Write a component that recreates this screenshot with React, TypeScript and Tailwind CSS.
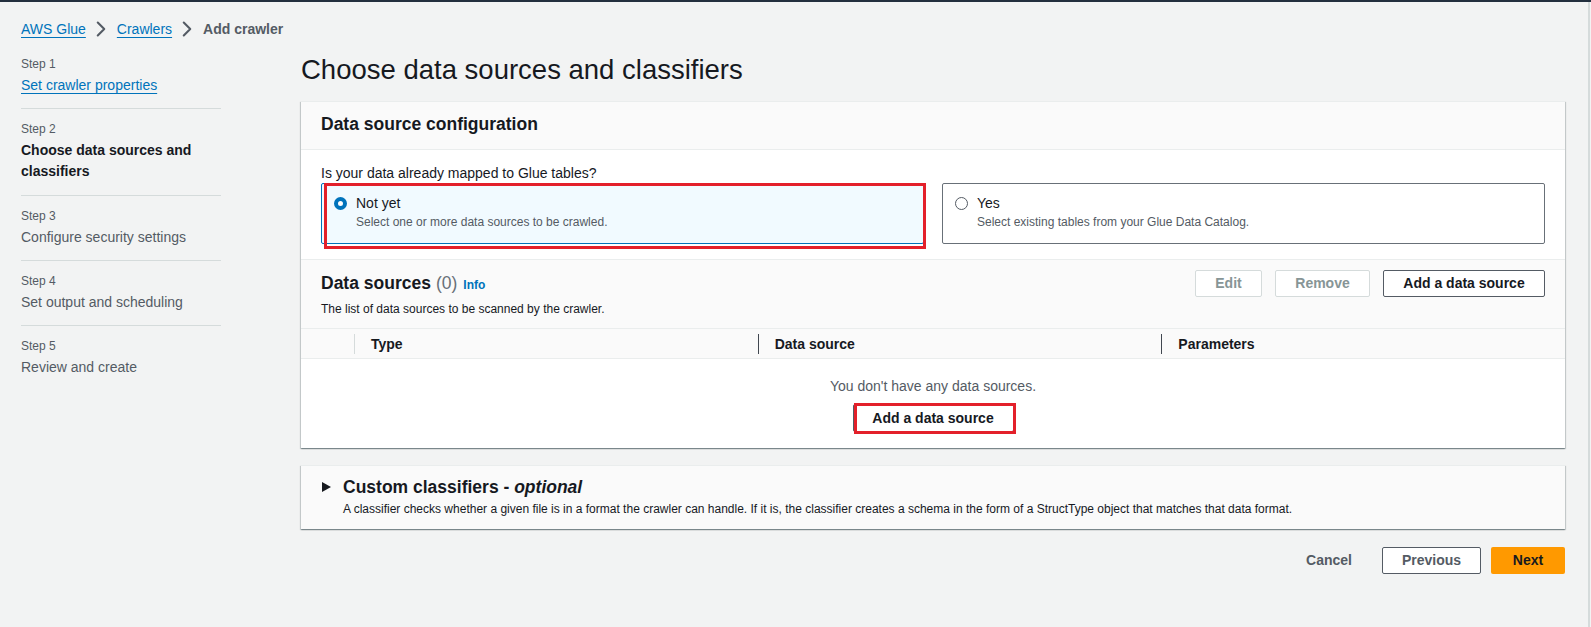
import { ChevronRight } from 'lucide-react'

// Step list for the wizard navigation
const STEPS = [
  { n: 1, label: 'Set crawler properties', state: 'done' },
  { n: 2, label: 'Choose data sources and classifiers', state: 'current' },
  { n: 3, label: 'Configure security settings', state: 'todo' },
  { n: 4, label: 'Set output and scheduling', state: 'todo' },
  { n: 5, label: 'Review and create', state: 'todo' },
]

const panelShadow =
  'border-t border-[#eaeded] shadow-[0_1px_1px_0_rgba(0,28,36,0.3),1px_1px_1px_0_rgba(0,28,36,0.15),-1px_1px_1px_0_rgba(0,28,36,0.15)]'

function Crumb() {
  return (
    <div className="flex items-center h-5 text-[14px] leading-5">
      <a className="text-[#0073bb] underline underline-offset-[3px]">AWS Glue</a>
      <ChevronRight className="w-[26px] h-[26px] ml-[2px] mr-[3px] text-[#545b64]" strokeWidth={1.9} />
      <a className="text-[#0073bb] underline underline-offset-[3px]">Crawlers</a>
      <ChevronRight className="w-[26px] h-[26px] ml-[2px] mr-[3px] text-[#545b64]" strokeWidth={1.9} />
      <span className="font-bold text-[#545b64]">Add crawler</span>
    </div>
  )
}

function StepNav() {
  return (
    <nav className="w-[200px] shrink-0 pt-[17px]">
      {STEPS.map((s, i) => (
        <div key={s.n} className={`${i > 0 ? 'border-t border-[#d5dbdb] pt-3' : ''} pb-[13px]`}>
          <div className="text-[12px] leading-4 text-[#545b64]">Step {s.n}</div>
          <div
            className={
              'mt-[3px] text-[14px] ' +
              (s.state === 'done'
                ? 'leading-5 text-[#0073bb] underline underline-offset-[3px]'
                : s.state === 'current'
                ? 'leading-[21px] font-bold text-[#16191f]'
                : 'leading-5 text-[#545b64]')
            }
          >
            {s.label}
          </div>
        </div>
      ))}
    </nav>
  )
}

function Tile({ selected, title, desc }: { selected: boolean; title: string; desc: string }) {
  return (
    <div
      className={
        'relative border rounded-[2px] pl-3 pt-[9px] pb-[13px] ' +
        (selected ? 'bg-[#f1faff] border-[#0073bb]' : 'bg-white border-[#687078]')
      }
    >
      <div className="flex items-center h-5">
        {selected ? (
          <span className="w-[13px] h-[13px] rounded-full border-[4px] border-[#0073bb] bg-white" />
        ) : (
          <span className="w-[13px] h-[13px] rounded-full border border-[#545b64] bg-white" />
        )}
        <span className="ml-[9px] text-[14px] leading-5 text-[#16191f]">{title}</span>
      </div>
      <div className="mt-[1px] ml-[22px] text-[12px] leading-4 text-[#545b64]">{desc}</div>
      {selected && (
        <div className="absolute left-[2px] -right-[3px] -top-[1px] -bottom-[6px] border-[3px] border-[#e3202a] pointer-events-none" />
      )}
    </div>
  )
}

function Btn({ children, w, disabled }: { children: string; w: string; disabled?: boolean }) {
  return (
    <button
      className={
        `${w} h-[27px] rounded-[2px] border bg-white text-[14px] font-bold ` +
        (disabled ? 'border-[#d5dbdb] text-[#879596]' : 'border-[#545b64] text-[#16191f]')
      }
    >
      {children}
    </button>
  )
}

export default function App() {
  return (
    <div className="min-h-screen bg-[#f2f3f3] font-['Liberation_Sans',Arial,sans-serif] text-[#16191f] flex flex-col">
      <div className="h-[2px] bg-[#232f3e]" />
      <div className="flex flex-1">
        <div className="flex-1 pl-[21px] pr-[23px] pt-[17px]">
          <Crumb />

          <div className="flex gap-[80px]">
            <StepNav />

            <main className="flex-1 pt-[13px]">
              <h1 className="text-[27.5px] leading-9 text-[#16191f]">Choose data sources and classifiers</h1>

              {/* Data source configuration */}
              <section className={`mt-[13px] bg-white ${panelShadow}`}>
                <div className="bg-[#fafafa] px-5 pt-[11px] pb-[14px] border-b border-[#eaeded]">
                  <h2 className="text-[17.5px] leading-[22px] font-bold">Data source configuration</h2>
                </div>
                <div className="px-5 pt-[13px] pb-[15px]">
                  <p className="text-[14px] leading-5">Is your data already mapped to Glue tables?</p>
                  <div className="grid grid-cols-2 gap-[18px]">
                    <Tile selected title="Not yet" desc="Select one or more data sources to be crawled." />
                    <Tile selected={false} title="Yes" desc="Select existing tables from your Glue Data Catalog." />
                  </div>
                </div>

                <div className="border-t border-b border-[#eaeded] bg-[#fafafa] px-5 pt-3 pb-[11px] flex justify-between">
                  <div>
                    <div className="flex items-baseline text-[17.5px] leading-[22px]">
                      <span className="font-bold">Data sources</span>
                      <span className="ml-[5px] text-[#687078]">(0)</span>
                      <a className="ml-[6px] text-[12px] font-bold text-[#0073bb]">Info</a>
                    </div>
                    <p className="mt-[5px] text-[12px] leading-4 text-[#16191f]">
                      The list of data sources to be scanned by the crawler.
                    </p>
                  </div>
                  <div className="flex gap-[13px] -mt-[2px]">
                    <Btn w="w-[67px]" disabled>Edit</Btn>
                    <Btn w="w-[95px]" disabled>Remove</Btn>
                    <Btn w="w-[162px]">Add a data source</Btn>
                  </div>
                </div>

                <div className="grid grid-cols-[53px_1fr_1fr_1fr] h-[30px] bg-[#fafafa] border-b border-[#eaeded] text-[14px] font-bold items-center">
                  <div className="h-5" />
                  <div className="h-5 border-l border-[#d5dbdb] pl-4 leading-5">Type</div>
                  <div className="h-5 border-l border-[#414750] pl-4 leading-5">Data source</div>
                  <div className="h-5 border-l border-[#414750] pl-4 leading-5">Parameters</div>
                </div>

                <div className="flex flex-col items-center pt-[17px] pb-4">
                  <p className="text-[14px] leading-5 text-[#545b64]">You don't have any data sources.</p>
                  <div className="relative mt-2">
                    <button className="w-[161px] h-[28px] rounded-[2px] border border-[#545b64] bg-white text-[14px] font-bold text-[#16191f]">
                      Add a data source
                    </button>
                    <div className="absolute left-[1px] -right-[2px] -top-[1px] -bottom-[2px] border-[3px] border-[#e3202a] pointer-events-none" />
                  </div>
                </div>
              </section>

              {/* Custom classifiers */}
              <section className={`mt-[17px] bg-[#fafafa] ${panelShadow} pl-[21px] pr-5 pt-[10px] pb-3 flex`}>
                <svg width="9" height="10" viewBox="0 0 9 10" className="mt-[6px] shrink-0">
                  <polygon points="0,0 9,5 0,10" fill="#16191f" />
                </svg>
                <div className="ml-3">
                  <h2 className="text-[17.5px] leading-[22px] font-bold">
                    Custom classifiers - <i>optional</i>
                  </h2>
                  <p className="mt-[3px] text-[12px] leading-4 text-[#16191f]">
                    A classifier checks whether a given file is in a format the crawler can handle. If it is, the classifier creates a schema in the form of a StructType object that matches that data format.
                  </p>
                </div>
              </section>

              {/* Footer actions */}
              <div className="mt-[18px] flex justify-end items-center gap-[10px]">
                <button className="h-[27px] px-5 text-[14px] font-bold text-[#545b64]">Cancel</button>
                <button className="w-[99px] h-[27px] rounded-[2px] border border-[#545b64] bg-white text-[14px] font-bold text-[#545b64]">
                  Previous
                </button>
                <button className="w-[74px] h-[27px] rounded-[2px] bg-[#ff9900] text-[14px] font-bold text-[#16191f]">
                  Next
                </button>
              </div>
            </main>
          </div>
        </div>
        <div className="w-[3px] border-l-2 border-[#d5dbdb]" />
      </div>
    </div>
  )
}
